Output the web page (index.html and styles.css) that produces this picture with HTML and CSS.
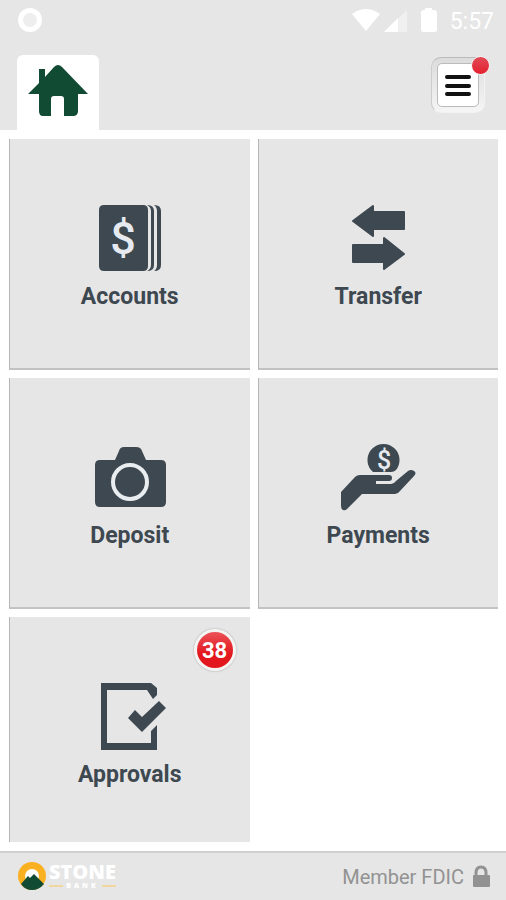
FILE: index.html
```html
<!DOCTYPE html>
<html lang="en">
<head>
<meta charset="utf-8">
<meta name="viewport" content="width=device-width, initial-scale=1">
<title>Stone Bank</title>
<link rel="stylesheet" href="styles.css">
</head>
<body>
<header class="header">
  <div class="status">
    <span class="status-ring"></span>
    <svg class="status-icons" width="88" height="26" viewBox="0 0 88 26" fill="#fff" aria-hidden="true">
      <path d="M0 7Q14-3 28 7L14 24Z"/>
      <path d="M32 25L55 3V25Z" opacity=".4"/>
      <path d="M32 25L46 11V25Z"/>
      <path d="M73 1h7v2h2q3 0 3 3v16q0 3-2 3H71q-2 0-2-3V6q0-3 3-3h1Z"/>
    </svg>
    <span class="status-time">5:57</span>
  </div>
  <nav class="nav">
    <a class="home" href="#" aria-label="Home">
      <svg width="60" height="54" viewBox="0 0 60 54" fill="#124b34" aria-hidden="true">
        <path d="M0 30L11 19V5H17V13L26 3Q30-1 34 3L60 30H50V47Q50 52 45 52H36V35Q36 32 33 32H26Q23 32 23 35V52H15Q11 52 11 47V30Z"/>
      </svg>
    </a>
    <button class="menu" type="button" aria-label="Menu">
      <span class="menu-face">
        <svg width="28" height="24" viewBox="0 0 28 24" stroke="#111" stroke-width="4" stroke-linecap="round" aria-hidden="true">
          <path d="M3 4H25M3 13H25M3 21H25"/>
        </svg>
      </span>
      <span class="menu-dot"></span>
    </button>
  </nav>
</header>

<main class="tiles">
  <a class="tile" href="#">
    <svg class="icon" viewBox="0 0 80 72" aria-hidden="true">
      <path d="M14 2H53Q58 2 58 7V63Q58 68 53 68H14Q9 68 9 63V7Q9 2 14 2Z"/>
      <path d="M57 2Q64 2 64 8V62Q64 68 57 68Q61 66 61 62V8Q61 4 57 2Z"/>
      <path d="M64 2Q71 2 71 8V62Q71 68 64 68Q67 66 67 62V8Q67 4 64 2Z"/>
      <text class="icon-dollar" x="33" y="51">$</text>
    </svg>
    <span class="label">Accounts</span>
  </a>
  <a class="tile" href="#">
    <svg class="icon" viewBox="0 0 80 72" aria-hidden="true">
      <path class="soft" d="M15 18L35 3V9H66V26H35V33Z"/>
      <path class="soft" d="M66 51L46 35V42H15V59H46V66Z"/>
    </svg>
    <span class="label">Transfer</span>
  </a>
  <a class="tile" href="#">
    <svg class="icon" viewBox="0 0 80 72" aria-hidden="true">
      <path d="M10 18H25L29 9Q30 5 34 5H46Q51 5 52 9L56 18H71Q76 18 76 23V60Q76 65 71 65H10Q5 65 5 60V23Q5 18 10 18Z"/>
      <circle class="lens" cx="40" cy="40" r="17"/>
    </svg>
    <span class="label">Deposit</span>
  </a>
  <a class="tile" href="#">
    <svg class="icon" viewBox="0 0 80 72" aria-hidden="true">
      <path d="M33 28A16 16 0 1 1 58 28Q56 30 53 30H35Z"/>
      <text class="icon-coin" x="46" y="27">$</text>
      <path d="M3 50L17 35Q19 33 22 33H51Q54 33 54 36T51 39H38V42H53Q56 42 58 39L70 29Q73 27 76 29T76 34L62 49Q60 52 57 52H24L9 67Q7 69 5 68T3 64Z"/>
    </svg>
    <span class="label">Payments</span>
  </a>
  <a class="tile" href="#">
    <svg class="icon" viewBox="0 0 80 72" aria-hidden="true">
      <path d="M11 2H61L67 7V14L63 18L57 9H17V62H61V50L67 44V69H11Z"/>
      <path d="M38 37L45 29L52 36L69 20L76 27L52 51Z"/>
    </svg>
    <span class="label">Approvals</span>
    <span class="badge">38</span>
  </a>
</main>

<footer class="footer">
  <div class="brand">
    <svg width="30" height="30" viewBox="0 0 30 30" aria-hidden="true">
      <circle cx="15" cy="14" r="14" fill="#f9b021"/>
      <circle cx="15" cy="14" r="7" fill="#fff"/>
      <path d="M4 22L11 14L13 16L17 12L27 22Q22 28 15 28T4 22Z" fill="#124b34"/>
    </svg>
    <div class="wordmark">
      <span class="wordmark-name">STONE</span>
      <span class="wordmark-sub">BANK</span>
    </div>
  </div>
  <div class="fdic">
    <span>Member FDIC</span>
    <svg width="18" height="24" viewBox="0 0 18 24" aria-hidden="true">
      <path d="M4 12V8Q4 2 9 2T14 8V12" fill="none" stroke="#929292" stroke-width="3"/>
      <rect x="1" y="10" width="17" height="12" rx="1" fill="#929292"/>
    </svg>
  </div>
</footer>
</body>
</html>
```
FILE: styles.css
```css
* {
  box-sizing: border-box;
}

body {
  margin: 0;
  height: 100vh;
  display: flex;
  flex-direction: column;
  background: #fff;
  color: #3d4850;
  font-family: Roboto, "Liberation Sans", sans-serif;
}

a {
  color: inherit;
  text-decoration: none;
}

.header {
  background: #e6e6e6;
}

.status {
  display: flex;
  align-items: center;
  height: 40px;
  padding: 0 12px 0 18px;
}

.status-ring {
  width: 24px;
  height: 24px;
  margin-right: auto;
  border: 5px solid #fff;
  border-radius: 50%;
  background: #eee;
}

.status-time {
  margin-left: 10px;
  padding-top: 3px;
  color: #fff;
  font-size: 23px;
}

.nav {
  display: flex;
  justify-content: space-between;
  align-items: flex-end;
  height: 90px;
  padding: 0 21px 0 17px;
}

.home {
  display: flex;
  justify-content: center;
  width: 82px;
  height: 75px;
  padding-top: 9px;
  border-radius: 6px 6px 0 0;
  background: #fff;
}

.menu {
  position: relative;
  width: 54px;
  height: 56px;
  margin-bottom: 17px;
  padding: 5px;
  border: 1px solid #f3f3f3;
  border-top-color: #bbb;
  border-left-color: #ccc;
  border-radius: 10px;
  background: linear-gradient(#dcdcdc, #f5f5f5);
}

.menu-face {
  display: flex;
  align-items: center;
  justify-content: center;
  height: 100%;
  border: 1px solid #bbb;
  border-radius: 5px;
  background: #fff;
}

.menu-dot {
  position: absolute;
  top: -2px;
  right: -6px;
  width: 19px;
  height: 19px;
  border: 1px solid #f5eeee;
  border-radius: 50%;
  background: linear-gradient(#e04a55, #e52030);
}

.tiles {
  flex: 1;
  min-height: 0;
  display: grid;
  grid-template-columns: 1fr 1fr;
  grid-auto-rows: 231px;
  gap: 8px;
  margin: 9px 8px 9px 9px;
  overflow-y: auto;
  scrollbar-width: none;
}

.tile {
  position: relative;
  display: flex;
  flex-direction: column;
  align-items: center;
  padding-top: 64px;
  border-left: 1px solid #b5b5b5;
  border-bottom: 2px solid #c2c2c2;
  background: #e6e6e6;
}

.icon {
  width: 80px;
  height: 72px;
  fill: #3d4850;
}

.soft {
  stroke: #3d4850;
  stroke-width: 2px;
  stroke-linejoin: round;
}

.lens {
  fill: none;
  stroke: #e9edf0;
  stroke-width: 4px;
}

.icon-dollar,
.icon-coin {
  fill: #e6eaf0;
  font-weight: 500;
  text-anchor: middle;
}

.icon-dollar {
  font-size: 45px;
}

.icon-coin {
  font-size: 25px;
}

.label {
  margin-top: 9px;
  font-size: 23px;
  font-weight: 700;
  line-height: 26px;
}

.badge {
  position: absolute;
  top: 12px;
  right: 14px;
  width: 42px;
  height: 42px;
  border: 3px solid #f4f4f2;
  border-radius: 50%;
  background: linear-gradient(#ea5358, #e3181f 60%);
  box-shadow: 0 0 2px #999;
  color: #fff;
  font-size: 22px;
  font-weight: 700;
  line-height: 38px;
  text-align: center;
}

.footer {
  display: flex;
  justify-content: space-between;
  align-items: center;
  height: 49px;
  padding: 0 16px 0 17px;
  border-top: 2px solid #d0d0d0;
  background: #e6e6e6;
}

.brand {
  display: flex;
  align-items: center;
  gap: 2px;
}

.wordmark {
  display: flex;
  flex-direction: column;
  color: #fff;
  font-family: "Open Sans", sans-serif;
  font-weight: 800;
}

.wordmark-name {
  font-size: 20px;
  line-height: 18px;
}

.wordmark-sub {
  display: flex;
  align-items: center;
  gap: 3px;
  font-size: 7px;
  line-height: 10px;
  letter-spacing: 3px;
}

.wordmark-sub::before,
.wordmark-sub::after {
  content: "";
  flex: 1;
  height: 2px;
  background: #f0d79f;
}

.fdic {
  display: flex;
  align-items: center;
  gap: 8px;
  color: #929292;
  font-size: 20px;
}
```
